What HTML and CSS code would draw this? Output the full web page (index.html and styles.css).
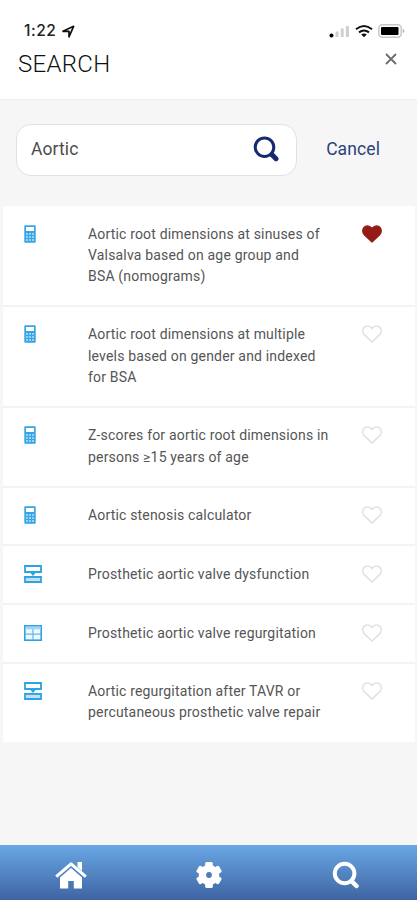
FILE: index.html
```html
<!DOCTYPE html>
<html lang="en">
<head>
<meta charset="utf-8">
<title>Search</title>
<link rel="stylesheet" href="styles.css">
</head>
<body>
<svg class="defs" width="0" height="0">
  <symbol id="calc" viewBox="0 0 12 18">
    <rect x=".3" y=".3" width="11.4" height="17.4" rx=".8" fill="#36a4e6"/>
    <rect x="2" y="2" width="8" height="4" fill="#fff"/>
    <path d="M2 9h8M2 12h8M2 15h8" stroke="#b9e0f8" stroke-width="1.6" stroke-dasharray="2 1"/>
  </symbol>
  <symbol id="flow" viewBox="0 0 18 18">
    <path d="M1 1h16v6H1zM1 12h16v5H1z" fill="#fff" stroke="#2ba3e4" stroke-width="1.8"/>
    <path d="M2 12.900h14v3H2z" fill="#c3dff5"/>
    <path d="M6 7.500h6L9 11z" fill="#2ba3e4"/>
  </symbol>
  <symbol id="table" viewBox="0 0 18 16">
    <rect x=".8" y=".8" width="16.400" height="14.400" fill="#f0f8fd" stroke="#2ba3e4" stroke-width="1.600"/>
    <path d="M1.600 3h14.800" stroke="#a5d3f3" stroke-width="2.500"/>
    <path d="M1 9.200h16M9 4v11" stroke="#61b7ea" stroke-width="1.200"/>
  </symbol>
  <symbol id="heart" viewBox="0 0 20 18">
    <path d="M10 17L2.300 9.700C-.1 7.200.4 3.500 2.700 1.900C5 .3 7.900.9 10 3.500C12.100.9 15 .3 17.300 1.900C19.600 3.500 20.100 7.200 17.700 9.700Z" stroke-width="1.300" stroke-linejoin="round"/>
  </symbol>
</svg>
<header class="header">
  <div class="status">
    <span class="time">1:22</span>
    <svg class="arrow" width="13" height="13" viewBox="0 0 13 13"><path d="M1 6.300L11.600 1.300L7 11.800V6.300Z" fill="none" stroke="#111" stroke-width="1.700" stroke-linejoin="round"/></svg>
    <svg class="signal" width="21" height="13" viewBox="0 0 21 13"><circle cx="2.500" cy="10.500" r="2" fill="#000"/><path d="M8 6.500V12M13.200 3.500V12M18.400 1V12" stroke="#cfcfcf" stroke-width="3"/></svg>
    <svg class="wifi" width="18" height="13" viewBox="0 0 18 13"><path d="M1 4.300Q9-2.200 17 4.300M4 7.400Q9 3.500 14 7.400" fill="none" stroke="#111" stroke-width="2"/><path d="M6.200 9.500Q9 7.500 11.800 9.500L9 12.300Z" fill="#111"/></svg>
    <svg class="battery" width="27" height="14" viewBox="0 0 27 14"><rect x=".8" y=".8" width="22.400" height="12.400" rx="3.500" fill="#fff" stroke="#c8c8c8" stroke-width="1.500"/><rect x="3" y="3" width="17.500" height="8" rx="1" fill="#000"/><path d="M24.800 5v4q1.500-.5 1.500-2t-1.500-2" fill="#aaa"/></svg>
  </div>
  <div class="title-row">
    <h1>SEARCH</h1>
    <svg width="12" height="12" viewBox="0 0 12 12"><path d="M1 1l10 10M11 1L1 11" stroke="#6c6c6c" stroke-width="1.800"/></svg>
  </div>
</header>
<div class="search">
  <div class="field">
    <span>Aortic</span>
    <svg width="26" height="26" viewBox="0 0 26 26"><circle cx="11.500" cy="11.200" r="9.300" fill="none" stroke="#172a70" stroke-width="3"/><path d="M19 18.700l4 4" stroke="#172a70" stroke-width="5" stroke-linecap="round"/></svg>
  </div>
  <span class="cancel">Cancel</span>
</div>
<main class="list">
  <div class="row"><svg class="calc"><use href="#calc"/></svg><p>Aortic root dimensions at sinuses of<br>Valsalva based on age group and<br>BSA (nomograms)</p><svg class="heart on"><use href="#heart"/></svg></div>
  <div class="row"><svg class="calc"><use href="#calc"/></svg><p>Aortic root dimensions at multiple<br>levels based on gender and indexed<br>for BSA</p><svg class="heart"><use href="#heart"/></svg></div>
  <div class="row"><svg class="calc"><use href="#calc"/></svg><p>Z-scores for aortic root dimensions in<br>persons ≥15 years of age</p><svg class="heart"><use href="#heart"/></svg></div>
  <div class="row"><svg class="calc"><use href="#calc"/></svg><p>Aortic stenosis calculator</p><svg class="heart"><use href="#heart"/></svg></div>
  <div class="row"><svg class="flow"><use href="#flow"/></svg><p>Prosthetic aortic valve dysfunction</p><svg class="heart"><use href="#heart"/></svg></div>
  <div class="row"><svg class="table"><use href="#table"/></svg><p>Prosthetic aortic valve regurgitation</p><svg class="heart"><use href="#heart"/></svg></div>
  <div class="row"><svg class="flow"><use href="#flow"/></svg><p>Aortic regurgitation after TAVR or<br>percutaneous prosthetic valve repair</p><svg class="heart"><use href="#heart"/></svg></div>
</main>
<nav class="tabs">
  <svg class="home" width="32" height="28" viewBox="0 0 32 28"><path d="M1.500 14.500L16 2L30.500 14.500" fill="none" stroke="#fff" stroke-width="3.300" stroke-linecap="square" stroke-linejoin="round" transform="translate(1 1) scale(.94)"/><path d="M22.500 1h4.500v9l-4.500-4z" fill="#fff"/><path d="M5 16.500L16 7l11 9.500V27.500h-8.200V20h-5.600v7.500H5z" fill="#fff"/></svg>
  <svg width="28" height="28" viewBox="0 0 28 28"><g fill="#fff"><circle cx="14" cy="14" r="10.300"/><rect x="10.200" y="1" width="7.600" height="26" rx="1.500"/><rect x="10.200" y="1" width="7.600" height="26" rx="1.500" transform="rotate(60 14 14)"/><rect x="10.200" y="1" width="7.600" height="26" rx="1.500" transform="rotate(120 14 14)"/></g><circle cx="14" cy="14" r="2.900" fill="#4a7cbd"/></svg>
  <svg class="find" width="28" height="28" viewBox="0 0 28 28"><circle cx="12.600" cy="12.500" r="9.800" fill="none" stroke="#fff" stroke-width="4"/><path d="M20 20.500l4.500 4.500" stroke="#fff" stroke-width="4.500" stroke-linecap="round"/></svg>
</nav>
</body>
</html>
```
FILE: styles.css
```css
* { box-sizing: border-box; }
body { margin: 0; width: 417px; height: 900px; display: flex; flex-direction: column; background: #f6f6f6; font-family: Roboto, sans-serif; color: #4c4c4c; overflow: hidden; }
.defs { display: block; flex: none; height: 0; }
.header { height: 100px; background: #fff; border-bottom: 1px solid #eee; padding-top: 22px; }
.status { height: 18px; display: flex; align-items: center; padding: 0 12px 0 24px; }
.time { width: 35px; font: 500 15.500px/18px Inter, sans-serif; letter-spacing: .5px; color: #222; }
.arrow { margin-left: 3px; }
.signal { margin-left: auto; }
.wifi { margin-left: 5px; }
.battery { margin-left: 5px; }
.title-row { display: flex; justify-content: space-between; padding: 9px 20px 0 18px; height: 36px; }
.title-row svg { margin-top: 4px; }
h1 { margin: 0; font-size: 24px; line-height: 30px; font-weight: 300; letter-spacing: .3px; color: #111; }
.search { height: 106px; padding: 24px 37px 0 16px; display: flex; justify-content: space-between; }
.field { width: 281px; height: 52px; border: 1.500px solid #dfe1e2; border-radius: 15px; background: #fff; display: flex; align-items: center; justify-content: space-between; padding: 0 17px 3px 14px; font-size: 17.500px; letter-spacing: .1px; }
.cancel { font-size: 17.500px; line-height: 50px; letter-spacing: .1px; color: #2c4379; }
.list { margin: 0 2px 0 3px; }
.row { display: flex; align-items: flex-start; padding: 17.500px 33px 18px 20px; background: #fff; border-bottom: 2px solid #f3f3f5; }
.row:last-child { border-bottom: 0; }
.row p { margin: 0; flex: 1; font-size: 14px; line-height: 21.150px; letter-spacing: .18px; white-space: nowrap; color: #555; }
.calc { width: 12px; height: 18px; margin: 1px 52px 0 1px; }
.flow { width: 18px; height: 18px; margin: 1px 46px 0 1px; }
.table { width: 18px; height: 16px; margin: 2px 46px 0 1px; }
.heart { width: 20px; height: 18px; margin-top: 1px; fill: #fff; stroke: #ddd; }
.heart.on { fill: #951b16; stroke: #951b16; }
.tabs { height: 55px; margin-top: auto; padding: 5px 0 0; display: grid; grid-template-columns: 1fr 1fr 1fr; align-items: center; justify-items: center; background: linear-gradient(#69a7e5, #3f64a2); }
.home { margin-left: 2px; }
.find { margin-right: 3px; }
```
